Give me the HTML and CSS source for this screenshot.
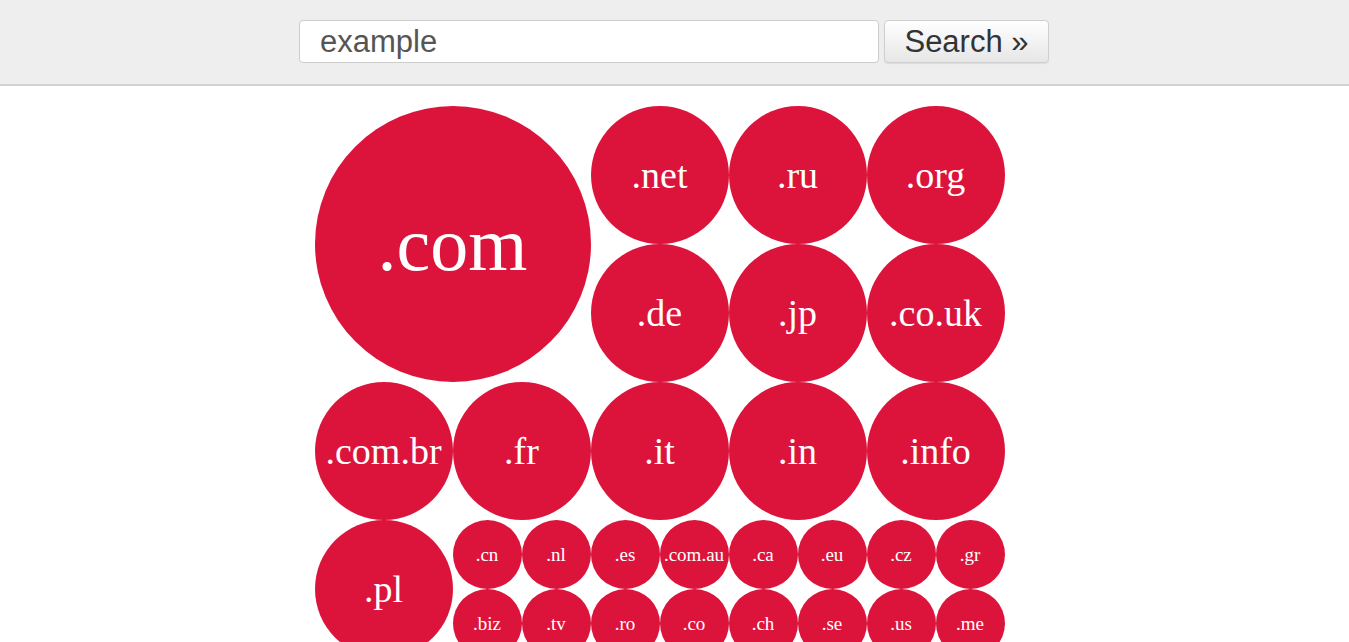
FILE: index.html
```
<!DOCTYPE html>
<html>
<head>
<meta charset="utf-8">
<title>Domain search</title>
<link rel="stylesheet" href="styles.css">
</head>
<body>
<header class="top">
  <form class="search">
    <input class="search-input" type="text" value="example">
    <button class="search-btn" type="button">Search »</button>
  </form>
</header>
<main class="wrap">
  <div class="bubbles">
    <div class="b b-xl">.com</div>
    <div class="b b-m">.net</div>
    <div class="b b-m">.ru</div>
    <div class="b b-m">.org</div>
    <div class="b b-m">.de</div>
    <div class="b b-m">.jp</div>
    <div class="b b-m">.co.uk</div>
    <div class="b b-m">.com.br</div>
    <div class="b b-m">.fr</div>
    <div class="b b-m">.it</div>
    <div class="b b-m">.in</div>
    <div class="b b-m">.info</div>
    <div class="b b-m">.pl</div>
    <div class="b b-s">.cn</div>
    <div class="b b-s">.nl</div>
    <div class="b b-s">.es</div>
    <div class="b b-s">.com.au</div>
    <div class="b b-s">.ca</div>
    <div class="b b-s">.eu</div>
    <div class="b b-s">.cz</div>
    <div class="b b-s">.gr</div>
    <div class="b b-s">.biz</div>
    <div class="b b-s">.tv</div>
    <div class="b b-s">.ro</div>
    <div class="b b-s">.co</div>
    <div class="b b-s">.ch</div>
    <div class="b b-s">.se</div>
    <div class="b b-s">.us</div>
    <div class="b b-s">.me</div>
  </div>
</main>
</body>
</html>
```
FILE: styles.css
```
html, body {
  margin: 0;
  padding: 0;
  background: #fff;
}
body {
  font-family: "Liberation Sans", Arial, sans-serif;
}
.top {
  background: #eeeeee;
  border-bottom: 2px solid #d2d2d2;
  padding: 20px 0 21px;
}
.search {
  display: flex;
  justify-content: center;
  gap: 5px;
  margin: 0;
  padding-right: 1px;
}
.search-input {
  box-sizing: border-box;
  width: 580px;
  height: 43px;
  border: 1px solid #cccccc;
  border-radius: 4px;
  background: #fff;
  padding: 0 0 0 20px;
  font-family: "Liberation Sans", Arial, sans-serif;
  font-size: 31px;
  color: #555555;
  outline: none;
}
.search-btn {
  box-sizing: border-box;
  width: 165px;
  height: 43px;
  border: 1px solid #cfcfcf;
  border-radius: 4px;
  background: linear-gradient(#ffffff, #e6e6e6);
  box-shadow: 0 1px 1px rgba(0,0,0,0.08);
  font-family: "Liberation Sans", Arial, sans-serif;
  font-size: 31px;
  color: #333333;
  padding: 0;
}
.wrap {
  width: 720px;
  margin: 20px auto 0;
}
.bubbles {
  display: grid;
  grid-template-columns: repeat(10, 69px);
  grid-auto-rows: 69px;
}
.b {
  display: flex;
  align-items: center;
  justify-content: center;
  border-radius: 50%;
  background: #dc143c;
  color: #ffffff;
  font-family: "Liberation Serif", "Times New Roman", serif;
  white-space: nowrap;
}
.b-xl {
  grid-column: span 4;
  grid-row: span 4;
  font-size: 76px;
}
.b-m {
  grid-column: span 2;
  grid-row: span 2;
  font-size: 38px;
}
.b-s {
  font-size: 19px;
}
```
